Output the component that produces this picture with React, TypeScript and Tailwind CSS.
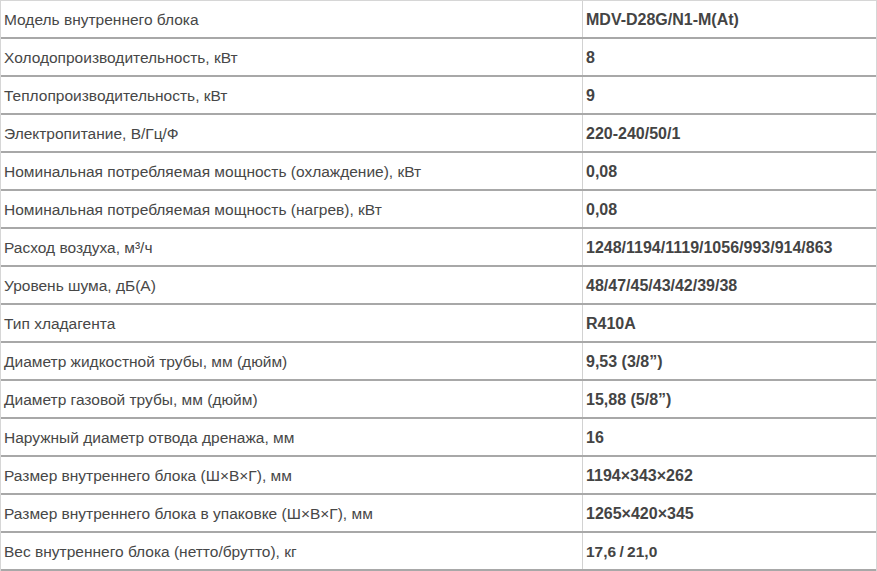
import React from "react";

const rows: [string, string][] = [
  ["Модель внутреннего блока", "MDV-D28G/N1-M(At)"],
  ["Холодопроизводительность, кВт", "8"],
  ["Теплопроизводительность, кВт", "9"],
  ["Электропитание, В/Гц/Ф", "220-240/50/1"],
  ["Номинальная потребляемая мощность (охлаждение), кВт", "0,08"],
  ["Номинальная потребляемая мощность (нагрев), кВт", "0,08"],
  ["Расход воздуха, м³/ч", "1248/1194/1119/1056/993/914/863"],
  ["Уровень шума, дБ(А)", "48/47/45/43/42/39/38"],
  ["Тип хладагента", "R410A"],
  ["Диаметр жидкостной трубы, мм (дюйм)", "9,53 (3/8”)"],
  ["Диаметр газовой трубы, мм (дюйм)", "15,88 (5/8”)"],
  ["Наружный диаметр отвода дренажа, мм", "16"],
  ["Размер внутреннего блока (Ш×В×Г), мм", "1194×343×262"],
  ["Размер внутреннего блока в упаковке (Ш×В×Г), мм", "1265×420×345"],
  ["Вес внутреннего блока (нетто/брутто), кг", "17,6 / 21,0"],
];

export default function App() {
  return (
    <div
      className="w-[877px] bg-white text-[#474747]"
      style={{ fontFamily: '"Liberation Sans", Arial, sans-serif' }}
    >
      <div className="border-t border-l border-r border-[#d6d6d6]">
        {rows.map(([k, v], i) => {
          const last = i === rows.length - 1;
          return (
            <div key={i} className="flex h-[38px] border-b-2 border-[#a8a8a8]">
              <div className="w-[582px] shrink-0 flex items-center pt-px pl-[3px] border-r border-[#d2d2d2] text-[15.5px]">
                {k}
              </div>
              <div
                className={
                  last
                    ? "flex-1 flex items-center pt-px pl-[3px] font-bold text-[#444] text-[15.5px] [word-spacing:-1px]"
                    : "flex-1 flex items-center pt-px pl-[3px] font-bold text-[#444] text-[16px]"
                }
              >
                {v}
              </div>
            </div>
          );
        })}
      </div>
    </div>
  );
}
